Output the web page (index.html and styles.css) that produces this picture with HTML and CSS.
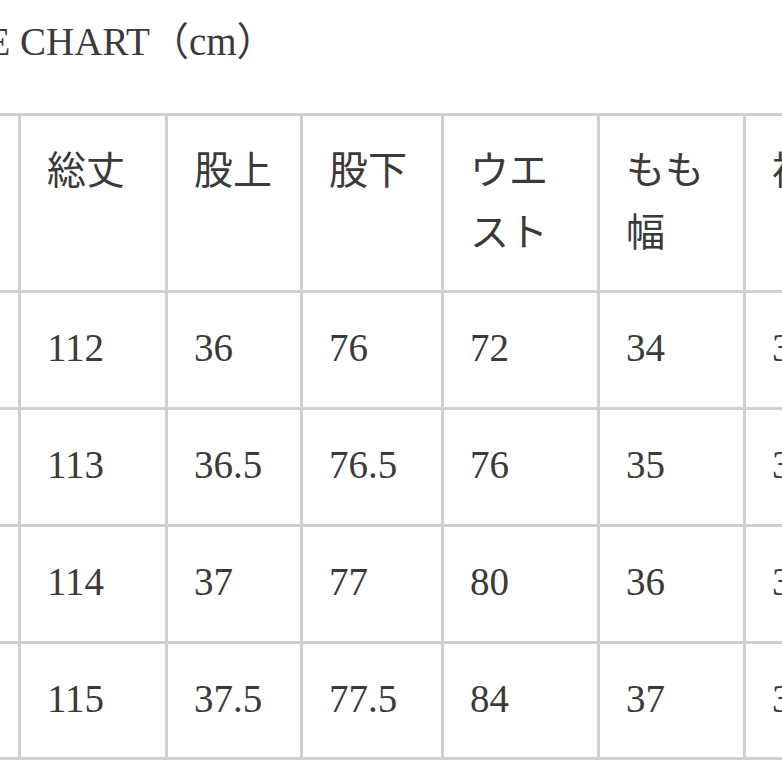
FILE: index.html
```html
<!DOCTYPE html>
<html lang="ja">
<head>
<meta charset="utf-8">
<title>SIZE CHART</title>
<link rel="stylesheet" href="styles.css">
</head>
<body>
<div class="page">
  <h1 class="title">SIZE CHART（cm）</h1>
  <div class="chart" role="table">
    <div class="cell">サイズ</div>
    <div class="cell">総丈</div>
    <div class="cell">股上</div>
    <div class="cell">股下</div>
    <div class="cell">ウエ<br>スト</div>
    <div class="cell">もも<br>幅</div>
    <div class="cell">裾幅</div>

    <div class="cell">S</div>
    <div class="cell">112</div>
    <div class="cell">36</div>
    <div class="cell">76</div>
    <div class="cell">72</div>
    <div class="cell">34</div>
    <div class="cell">31</div>

    <div class="cell">M</div>
    <div class="cell">113</div>
    <div class="cell">36.5</div>
    <div class="cell">76.5</div>
    <div class="cell">76</div>
    <div class="cell">35</div>
    <div class="cell">32</div>

    <div class="cell">L</div>
    <div class="cell">114</div>
    <div class="cell">37</div>
    <div class="cell">77</div>
    <div class="cell">80</div>
    <div class="cell">36</div>
    <div class="cell">33</div>

    <div class="cell">XL</div>
    <div class="cell">115</div>
    <div class="cell">37.5</div>
    <div class="cell">77.5</div>
    <div class="cell">84</div>
    <div class="cell">37</div>
    <div class="cell">34</div>
  </div>
</div>
</body>
</html>
```
FILE: styles.css
```css
html, body {
  margin: 0;
  padding: 0;
  background: #ffffff;
  overflow: hidden;
}

.page {
  padding-top: 20px;
  font-family: "Liberation Serif", "Noto Sans CJK JP", serif;
  font-size: 39px;
  color: #3a3a3a;
}

.title {
  margin: 0 0 49px -72px;
  height: 44px;
  font-size: 39px;
  line-height: 44px;
  font-weight: normal;
  white-space: nowrap;
  color: #3a3a3a;
}

.chart {
  display: grid;
  grid-template-columns: 190px 144px 132px 138px 153px 143px 140px;
  grid-template-rows: 174px 114px 114px 114px 113px;
  gap: 3px;
  padding: 3px;
  background: #d0d0d0;
  width: max-content;
  margin-left: -175px;
}

.cell {
  background: #ffffff;
  padding: 24px 20px 0 26px;
  line-height: 62px;
  white-space: nowrap;
}
```
